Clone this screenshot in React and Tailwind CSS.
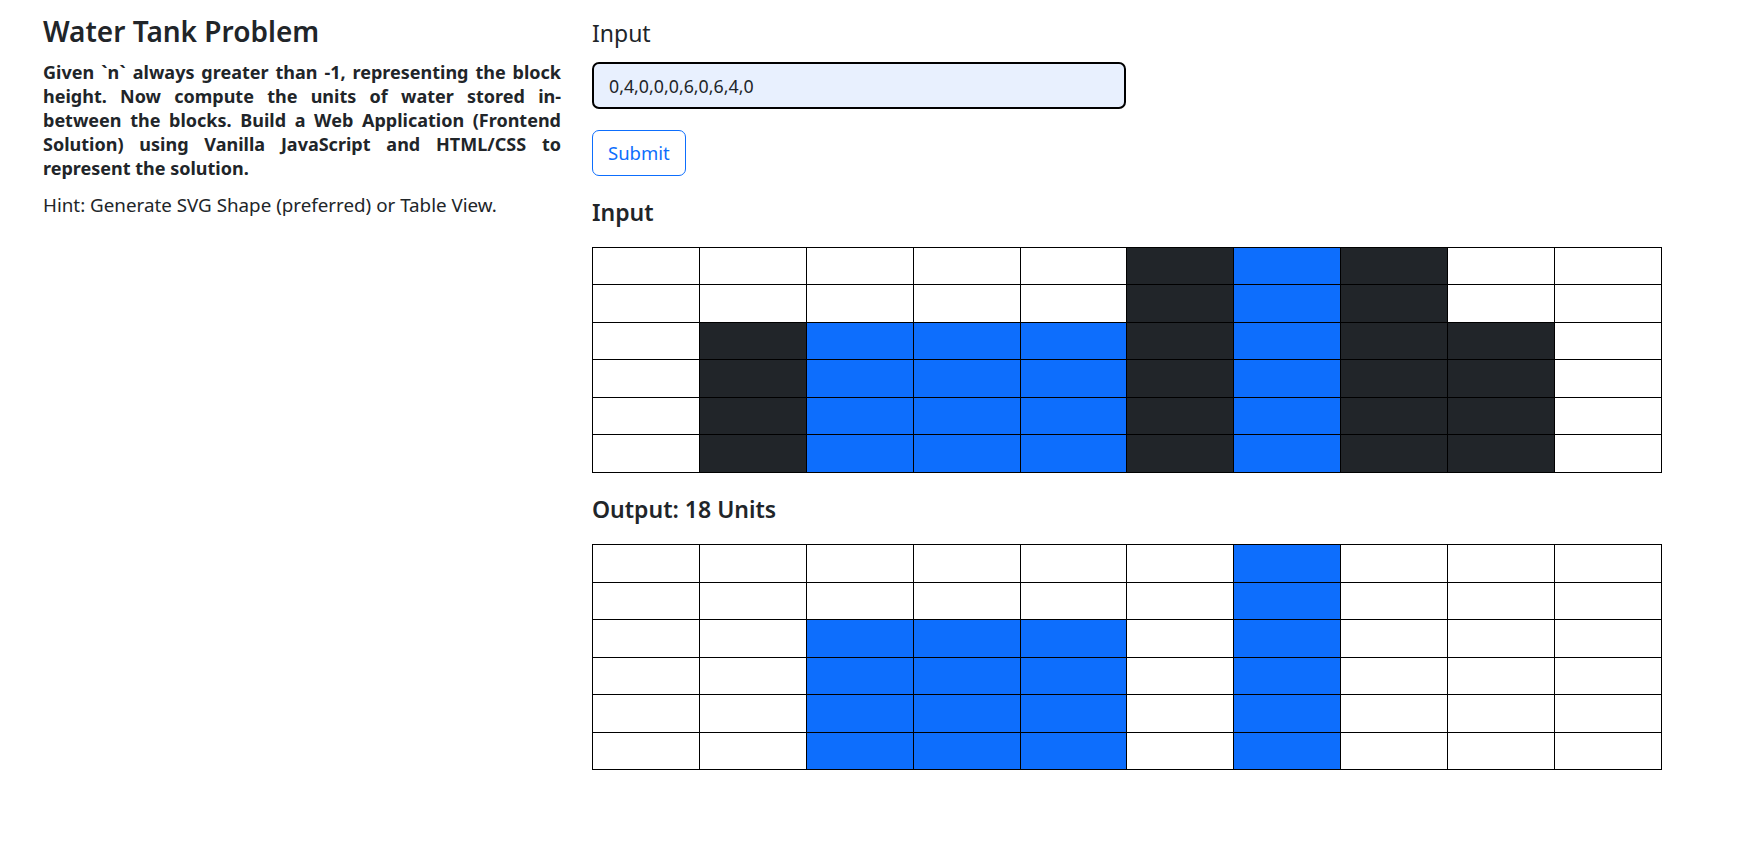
const heights = [0, 4, 0, 0, 0, 6, 0, 6, 4, 0];
const ROWS = 6;

function computeWater(h) {
  const n = h.length;
  const left = [];
  const right = [];
  let m = 0;
  for (let i = 0; i < n; i++) {
    m = Math.max(m, h[i]);
    left[i] = m;
  }
  m = 0;
  for (let i = n - 1; i >= 0; i--) {
    m = Math.max(m, h[i]);
    right[i] = m;
  }
  return h.map((v, i) => Math.min(left[i], right[i]) - v);
}

const water = computeWater(heights);
const total = water.reduce((a, b) => a + b, 0);

function Grid({ showBlocks }) {
  const rows = [];
  for (let r = 0; r < ROWS; r++) {
    const level = ROWS - r; // level counted from bottom
    rows.push(
      <tr key={r}>
        {heights.map((h, c) => {
          let color = 'bg-white';
          if (showBlocks && level <= h) color = 'bg-[#212529]';
          else if (level > h && level <= h + water[c]) color = 'bg-[#0d6efd]';
          return <td key={c} className={`h-[37.5px] border border-black p-0 ${color}`} />;
        })}
      </tr>
    );
  }
  return (
    <table className="w-[1070px] table-fixed border-collapse">
      <tbody>{rows}</tbody>
    </table>
  );
}

export default function App() {
  return (
    <div className="min-h-screen bg-white text-[#212529] font-['Noto_Sans',sans-serif] flex pl-[43px] pt-[15px]">
      <div className="w-[518px]">
        <h3 className="text-[28px] font-semibold leading-[1.2] mb-[11px]">Water Tank Problem</h3>
        <p className="text-[18px] font-bold leading-[24px] text-justify mb-[13px]">
          <span className="block [text-align-last:justify]">Given `n` always greater than -1, representing the block</span>
          <span className="block [text-align-last:justify]">height. Now compute the units of water stored in-</span>
          <span className="block [text-align-last:justify]">between the blocks. Build a Web Application (Frontend</span>
          <span className="block [text-align-last:justify]">Solution) using Vanilla JavaScript and HTML/CSS to</span>
          <span className="block">represent the solution.</span>
        </p>
        <p className="text-[18.8px] leading-[24px]">Hint: Generate SVG Shape (preferred) or Table View.</p>
      </div>

      <div className="ml-[31px] w-[1070px] pt-[3px]">
        <label className="block text-[23px] leading-[30px] mb-[14px]">Input</label>
        <input
          type="text"
          defaultValue="0,4,0,0,0,6,0,6,4,0"
          className="block w-[534px] h-[47px] px-[15px] text-[17.8px] bg-[#e8f0fe] border-2 border-black rounded-[7px] outline-none"
        />
        <button className="mt-[21px] h-[46px] px-[15px] text-[18.5px] text-[#0d6efd] border border-[#0d6efd] rounded-[7px] bg-white">
          Submit
        </button>
        <h5 className="mt-[23px] mb-[20px] text-[23px] font-semibold leading-[1.2]">Input</h5>
        <Grid showBlocks={true} />
        <h5 className="mt-[23px] mb-[21px] text-[23px] font-semibold leading-[1.2]">Output: {total} Units</h5>
        <Grid showBlocks={false} />
      </div>
    </div>
  );
}
